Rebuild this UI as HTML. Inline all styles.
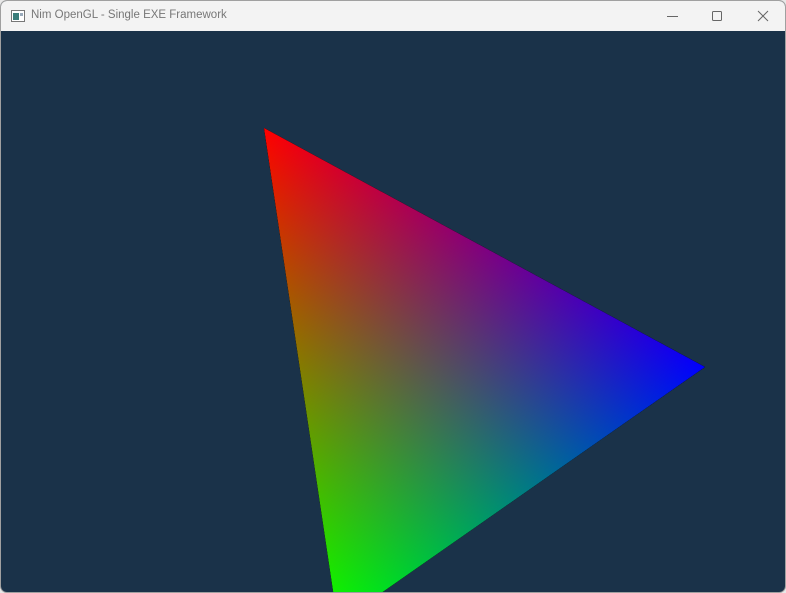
<!DOCTYPE html>
<html><head><meta charset="utf-8"><style>
html,body{margin:0;padding:0;width:786px;height:593px;overflow:hidden;background:#e8e8e8;}
.win{position:absolute;left:0;top:0;width:784px;height:591px;border:1px solid #a0a0a0;border-radius:7px;overflow:hidden;background:#1a3249;}
.tb{position:absolute;left:0;top:0;width:784px;height:30px;background:#f3f3f3;font-family:"Segoe UI","Liberation Sans",sans-serif;font-size:11.5px;color:#777;}
.tb .t{position:absolute;left:30px;top:8px;}
svg{position:absolute;left:0;top:0;}
</style></head><body>
<div class="win">
<div class="tb">
<svg width="784" height="30">
<rect x="10.5" y="9.5" width="13" height="11" fill="#fff" stroke="#777"/>
<rect x="12" y="12" width="6" height="7" fill="#3a7d7a"/>
<rect x="19" y="12" width="3" height="3" fill="#9ab"/>
<line x1="666" y1="15.5" x2="677" y2="15.5" stroke="#666"/>
<rect x="711.5" y="10.5" width="9" height="9" fill="none" stroke="#666" rx="1"/>
<path d="M757 10 L767 20 M767 10 L757 20" stroke="#666" stroke-width="1"/>
</svg>
<span class="t">Nim OpenGL - Single EXE Framework</span>
</div>
</div>
<svg width="786" height="592" viewBox="0 0 786 592">
<defs>
<linearGradient id="gr" gradientUnits="userSpaceOnUse" x1="264" y1="128" x2="520.5" y2="495.7"><stop offset="0" stop-color="#f00"/><stop offset="1" stop-color="#000"/></linearGradient>
<linearGradient id="gb" gradientUnits="userSpaceOnUse" x1="705" y1="367" x2="308.6" y2="426.2"><stop offset="0" stop-color="#00f"/><stop offset="1" stop-color="#000"/></linearGradient>
<linearGradient id="gg" gradientUnits="userSpaceOnUse" x1="338" y1="623" x2="528.6" y2="271.4"><stop offset="0" stop-color="#0f0"/><stop offset="1" stop-color="#000"/></linearGradient>
</defs>
<g style="isolation:isolate">
<polygon points="264,128 705,367 382.6,592 333.2,592" fill="url(#gr)"/>
<polygon points="264,128 705,367 382.6,592 333.2,592" fill="url(#gb)" style="mix-blend-mode:plus-lighter"/>
<polygon points="264,128 705,367 382.6,592 333.2,592" fill="url(#gg)" style="mix-blend-mode:plus-lighter"/>
</g>
</svg>
</body></html>
